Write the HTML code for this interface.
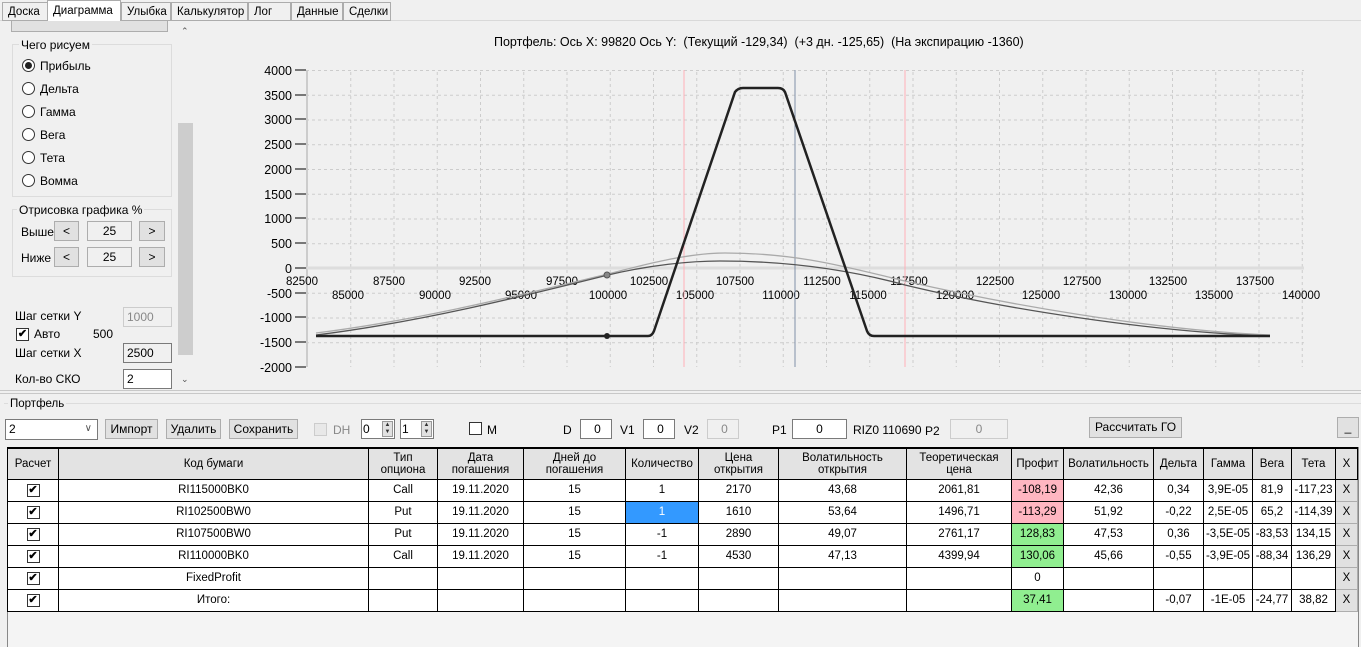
<!DOCTYPE html>
<html><head><meta charset="utf-8"><style>
*{box-sizing:border-box;margin:0;padding:0}
body{width:1361px;height:647px;background:#f0f0f0;font-family:"Liberation Sans",sans-serif;font-size:12px;color:#000;position:relative;overflow:hidden}
.a{position:absolute}
.tab{position:absolute;top:2px;height:19px;border:1px solid #acacac;background:#f0f0f0;padding:3px 0 0 5px;font-size:11.5px;white-space:nowrap;overflow:hidden}
.btn{position:absolute;border:1px solid #adadad;background:#e1e1e1;text-align:center;font-size:12px;line-height:19px}
.inp{position:absolute;border:1px solid #7a7a7a;background:#fff;font-size:12px;line-height:18px;padding-left:3px}
.rad{position:absolute;width:13px;height:13px;border:1px solid #333;border-radius:50%;background:#fff}
.chk{position:absolute;width:13px;height:13px;border:1px solid #333;background:#fff;font-size:11px;line-height:11px;text-align:center;font-weight:bold}
.ck{display:inline-block;width:13px;height:13px;border:1px solid #333;background:#fff;font-size:11px;line-height:11px;font-weight:bold;vertical-align:middle}
.sp{position:absolute;right:1px;top:1px;width:11px;height:16px;background:#e1e1e1;border:1px solid #999;font-size:6px;line-height:7px;text-align:center;color:#333}
table{position:absolute;left:7px;top:447px;border-collapse:collapse;font-size:11.5px;table-layout:fixed}
td{border:1px solid #000;text-align:center;height:22px;padding:0;white-space:nowrap;overflow:hidden;background:#fff}
th{border:1px solid #000;background:#e3e3e3;font-weight:normal;font-size:11.5px;height:31px;line-height:12px;border-top:2px solid #000}
.r{background:#ffb6c1}.g{background:#90ee90}.b{background:#3399ff;color:#fff}
.x{background:#e1e1e1;border:1px solid #adadad}
</style></head><body>
<div class="a" style="left:0;top:20px;width:1361px;height:1px;background:#d9d9d9"></div>
<div class="tab" style="left:2px;width:46px">Доска</div>
<div class="tab" style="left:47px;top:0;height:22px;width:74px;background:#fff;border-bottom:none;padding-top:4px">Диаграмма</div>
<div class="tab" style="left:121px;width:50px">Улыбка</div>
<div class="tab" style="left:171px;width:77px">Калькулятор</div>
<div class="tab" style="left:248px;width:43px">Лог</div>
<div class="tab" style="left:291px;width:52px">Данные</div>
<div class="tab" style="left:343px;width:48px">Сделки</div>

<div class="a" style="left:11px;top:21px;width:157px;height:11px;border:1px solid #adadad;border-top:none;background:#e1e1e1"></div>
<div class="a" style="left:12px;top:44px;width:160px;height:153px;border:1px solid #dcdcdc"></div>
<div class="a" style="left:19px;top:38px;background:#f0f0f0;padding:0 2px">Чего рисуем</div>
<div class="rad" style="left:22px;top:59px"><div style="width:7px;height:7px;border-radius:50%;background:#222;margin:2px"></div></div>
<div class="a" style="left:40px;top:59px">Прибыль</div>
<div class="rad" style="left:22px;top:82px"></div><div class="a" style="left:40px;top:82px">Дельта</div>
<div class="rad" style="left:22px;top:105px"></div><div class="a" style="left:40px;top:105px">Гамма</div>
<div class="rad" style="left:22px;top:128px"></div><div class="a" style="left:40px;top:128px">Вега</div>
<div class="rad" style="left:22px;top:151px"></div><div class="a" style="left:40px;top:151px">Тета</div>
<div class="rad" style="left:22px;top:174px"></div><div class="a" style="left:40px;top:174px">Вомма</div>

<div class="a" style="left:12px;top:209px;width:160px;height:68px;border:1px solid #dcdcdc"></div>
<div class="a" style="left:17px;top:203px;background:#f0f0f0;padding:0 2px">Отрисовка графика %</div>
<div class="a" style="left:21px;top:225px">Выше</div>
<div class="btn" style="left:54px;top:221px;width:25px;height:20px">&lt;</div>
<div class="btn" style="left:87px;top:221px;width:45px;height:20px;background:#f0f0f0">25</div>
<div class="btn" style="left:139px;top:221px;width:26px;height:20px">&gt;</div>
<div class="a" style="left:21px;top:251px">Ниже</div>
<div class="btn" style="left:54px;top:247px;width:25px;height:20px">&lt;</div>
<div class="btn" style="left:87px;top:247px;width:45px;height:20px;background:#f0f0f0">25</div>
<div class="btn" style="left:139px;top:247px;width:26px;height:20px">&gt;</div>
<div class="a" style="left:15px;top:309px">Шаг сетки Y</div>
<div class="inp" style="left:123px;top:307px;width:49px;height:20px;background:#f0f0f0;color:#888;border-color:#ccc">1000</div>
<div class="chk" style="left:16px;top:328px">✔</div><div class="a" style="left:34px;top:327px">Авто</div>
<div class="a" style="left:93px;top:327px">500</div>
<div class="a" style="left:15px;top:346px">Шаг сетки X</div>
<div class="inp" style="left:123px;top:343px;width:49px;height:20px;background:#f0f0f0">2500</div>
<div class="a" style="left:15px;top:372px">Кол-во СКО</div>
<div class="inp" style="left:123px;top:369px;width:49px;height:20px">2</div>
<div class="a" style="left:178px;top:22px;width:16px;height:366px;background:#f0f0f0"></div>
<div class="a" style="left:178px;top:123px;width:15px;height:232px;background:#cdcdcd"></div>
<div class="a" style="left:181px;top:26px;font-size:9px;color:#555">⌃</div>
<div class="a" style="left:181px;top:374px;font-size:9px;color:#555">⌄</div>

<div class="a" style="left:494px;top:35px;font-size:12.5px">Портфель: Ось X: 99820 Ось Y:&nbsp; (Текущий -129,34)&nbsp; (+3 дн. -125,65)&nbsp; (На экспирацию -1360)</div>
<svg class="a" style="left:0;top:0" width="1361" height="395" font-family="Liberation Sans" font-size="12.5">
<defs><pattern id="gv" x="307" y="0" width="43.25" height="6" patternUnits="userSpaceOnUse"><line x1="0.5" y1="0" x2="0.5" y2="3" stroke="#ccc"/></pattern>
<pattern id="gh" x="0" y="70" width="6" height="24.75" patternUnits="userSpaceOnUse"><line x1="0" y1="0.5" x2="3" y2="0.5" stroke="#ccc"/></pattern></defs>
<rect x="307" y="70" width="997" height="297" fill="url(#gv)"/>
<rect x="307" y="70" width="997" height="297" fill="url(#gh)"/>
<line x1="307" y1="70" x2="307" y2="367" stroke="#ccc" stroke-width="2"/>
<line x1="307" y1="268" x2="1304" y2="268" stroke="#ddd" stroke-width="3"/>
<g text-anchor="end">
<text x="292" y="75">4000</text><text x="292" y="100">3500</text><text x="292" y="124">3000</text><text x="292" y="149">2500</text><text x="292" y="174">2000</text><text x="292" y="199">1500</text><text x="292" y="223">1000</text><text x="292" y="248">500</text><text x="292" y="273">0</text><text x="292" y="298">-500</text><text x="292" y="322">-1000</text><text x="292" y="347">-1500</text><text x="292" y="372">-2000</text></g>
<g stroke="#000"><path d="M295 70h11M295 95h11M295 119h11M295 144h11M295 169h11M295 194h11M295 218h11M295 243h11M295 268h11M295 293h11M295 317h11M295 342h11M295 367h11"/></g>
<g text-anchor="middle" font-size="11.5">
<text x="302" y="285">82500</text><text x="389" y="285">87500</text><text x="475" y="285">92500</text><text x="562" y="285">97500</text><text x="649" y="285">102500</text><text x="735" y="285">107500</text><text x="822" y="285">112500</text><text x="909" y="285">117500</text><text x="995" y="285">122500</text><text x="1082" y="285">127500</text><text x="1168" y="285">132500</text><text x="1255" y="285">137500</text>
<text x="348" y="299">85000</text><text x="435" y="299">90000</text><text x="521" y="299">95000</text><text x="608" y="299">100000</text><text x="695" y="299">105000</text><text x="781" y="299">110000</text><text x="868" y="299">115000</text><text x="955" y="299">120000</text><text x="1041" y="299">125000</text><text x="1128" y="299">130000</text><text x="1214" y="299">135000</text><text x="1301" y="299">140000</text></g>
<line x1="684" y1="70" x2="684" y2="367" stroke="#ffb0b8"/>
<line x1="905" y1="70" x2="905" y2="367" stroke="#ffb0b8"/>
<line x1="795" y1="70" x2="795" y2="367" stroke="#8090a8"/>
<path d="M316 333 C420 320 520 295 608 274 C650 263 690 253 725 253 C800 253 850 268 905 281 C1000 303 1150 330 1270 335" fill="none" stroke="#aaa" stroke-width="1.3"/>
<path d="M316 335 C420 322 520 297 608 275 C650 265 690 261 720 261 C790 261 850 270 905 285 C1000 308 1150 332 1270 336" fill="none" stroke="#555" stroke-width="1.3"/>
<path d="M316 336 H648 Q652 336 654 331 L735 92 Q738 88 743 88 H778 Q783 88 785 92 L867 331 Q869 336 874 336 H1270" fill="none" stroke="#222" stroke-width="2.5"/>
<circle cx="607" cy="336" r="3" fill="#222"/><circle cx="607" cy="275" r="3" fill="#888" stroke="#555"/>
</svg>

<div class="a" style="left:0;top:390px;width:1361px;height:4px;background:#f0f0f0;border-top:1px solid #c8c8c8;border-bottom:1px solid #c8c8c8"></div>
<div class="a" style="left:4px;top:403px;width:1357px;height:1px;background:#dcdcdc"></div>
<div class="a" style="left:8px;top:398px;background:#f0f0f0;padding:0 2px;font-size:11.5px">Портфель</div>
<div class="inp" style="left:5px;top:419px;width:93px;height:21px">2<span style="position:absolute;right:5px;top:0;color:#555;font-size:10px">∨</span></div>
<div class="btn" style="left:105px;top:419px;width:53px;height:20px">Импорт</div>
<div class="btn" style="left:166px;top:419px;width:55px;height:20px">Удалить</div>
<div class="btn" style="left:229px;top:419px;width:69px;height:20px">Сохранить</div>
<div class="chk" style="left:314px;top:423px;border-color:#ccc;background:#e8e8e8"></div>
<div class="a" style="left:333px;top:423px;color:#888">DH</div>
<div class="inp" style="left:361px;top:419px;width:34px;height:20px;padding-left:1px">0<div class="sp">▲<br>▼</div></div>
<div class="inp" style="left:400px;top:419px;width:34px;height:20px;padding-left:1px">1<div class="sp">▲<br>▼</div></div>
<div class="chk" style="left:469px;top:422px"></div><div class="a" style="left:487px;top:423px">M</div>
<div class="a" style="left:563px;top:423px">D</div>
<div class="inp" style="left:580px;top:419px;width:32px;height:20px;text-align:center">0</div>
<div class="a" style="left:620px;top:423px">V1</div>
<div class="inp" style="left:643px;top:419px;width:32px;height:20px;text-align:center">0</div>
<div class="a" style="left:684px;top:423px">V2</div>
<div class="inp" style="left:707px;top:419px;width:32px;height:20px;text-align:center;background:#f0f0f0;color:#888;border-color:#ccc">0</div>
<div class="a" style="left:772px;top:423px">P1</div>
<div class="a" style="left:792px;top:419px;width:55px;height:20px;border:1px solid #7a7a7a;background:#fff;text-align:center;line-height:18px">0</div>
<div class="a" style="left:853px;top:423px">RIZ0 110690</div>
<div class="a" style="left:925px;top:424px">P2</div>
<div class="a" style="left:950px;top:419px;width:58px;height:20px;border:1px solid #ccc;background:#f0f0f0;color:#888;text-align:center;line-height:18px">0</div>
<div class="btn" style="left:1089px;top:417px;width:93px;height:21px">Рассчитать ГО</div>
<div class="btn" style="left:1337px;top:417px;width:22px;height:21px">_</div>

<div class="a" style="left:7px;top:447px;width:1352px;height:200px;border-left:1px solid #888;border-right:1px solid #888;background:#f4f4f4"></div>
<table>
<colgroup><col style="width:51px"><col style="width:310px"><col style="width:69px"><col style="width:86px"><col style="width:102px"><col style="width:73px"><col style="width:80px"><col style="width:128px"><col style="width:105px"><col style="width:52px"><col style="width:90px"><col style="width:50px"><col style="width:49px"><col style="width:39px"><col style="width:44px"><col style="width:22px"></colgroup>
<tr><th>Расчет</th><th>Код бумаги</th><th>Тип<br>опциона</th><th>Дата<br>погашения</th><th>Дней до<br>погашения</th><th>Количество</th><th>Цена<br>открытия</th><th>Волатильность<br>открытия</th><th>Теоретическая<br>цена</th><th>Профит</th><th>Волатильность</th><th>Дельта</th><th>Гамма</th><th>Вега</th><th>Тета</th><th>X</th></tr>
<tr><td><span class="ck">✔</span></td><td>RI115000BK0</td><td>Call</td><td>19.11.2020</td><td>15</td><td>1</td><td>2170</td><td>43,68</td><td>2061,81</td><td class="r">-108,19</td><td>42,36</td><td>0,34</td><td>3,9E-05</td><td>81,9</td><td>-117,23</td><td class="x">X</td></tr>
<tr><td><span class="ck">✔</span></td><td>RI102500BW0</td><td>Put</td><td>19.11.2020</td><td>15</td><td class="b">1</td><td>1610</td><td>53,64</td><td>1496,71</td><td class="r">-113,29</td><td>51,92</td><td>-0,22</td><td>2,5E-05</td><td>65,2</td><td>-114,39</td><td class="x">X</td></tr>
<tr><td><span class="ck">✔</span></td><td>RI107500BW0</td><td>Put</td><td>19.11.2020</td><td>15</td><td>-1</td><td>2890</td><td>49,07</td><td>2761,17</td><td class="g">128,83</td><td>47,53</td><td>0,36</td><td>-3,5E-05</td><td>-83,53</td><td>134,15</td><td class="x">X</td></tr>
<tr><td><span class="ck">✔</span></td><td>RI110000BK0</td><td>Call</td><td>19.11.2020</td><td>15</td><td>-1</td><td>4530</td><td>47,13</td><td>4399,94</td><td class="g">130,06</td><td>45,66</td><td>-0,55</td><td>-3,9E-05</td><td>-88,34</td><td>136,29</td><td class="x">X</td></tr>
<tr><td><span class="ck">✔</span></td><td>FixedProfit</td><td></td><td></td><td></td><td></td><td></td><td></td><td></td><td>0</td><td></td><td></td><td></td><td></td><td></td><td class="x">X</td></tr>
<tr><td><span class="ck">✔</span></td><td>Итого:</td><td></td><td></td><td></td><td></td><td></td><td></td><td></td><td class="g">37,41</td><td></td><td>-0,07</td><td>-1E-05</td><td>-24,77</td><td>38,82</td><td class="x">X</td></tr>
</table>
</body></html>
